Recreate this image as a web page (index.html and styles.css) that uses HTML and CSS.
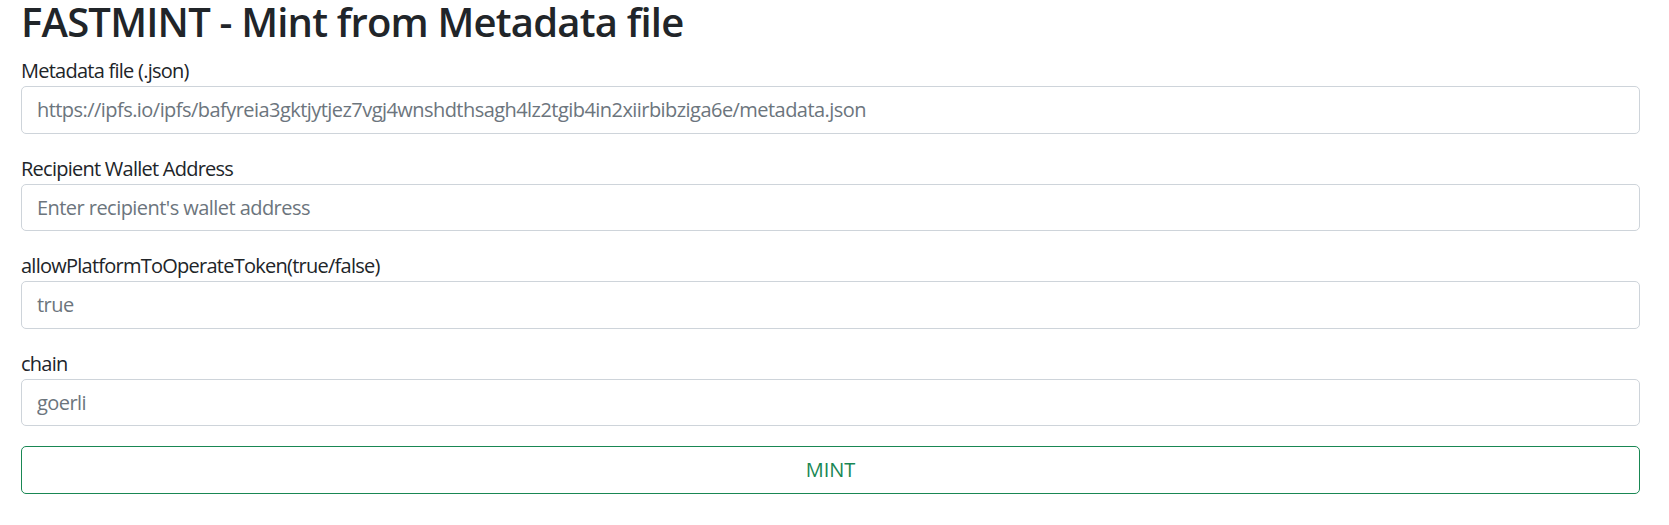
FILE: index.html
```html
<!DOCTYPE html>
<html lang="en">
<head>
<meta charset="utf-8">
<title>FASTMINT</title>
<link rel="stylesheet" href="styles.css">
</head>
<body>
<main class="page">
  <h1 class="title">FASTMINT - Mint from Metadata file</h1>
  <form class="form">
    <div class="group">
      <label class="label" for="meta">Metadata file (.json)</label>
      <input class="control" id="meta" type="text" placeholder="https://ipfs.io/ipfs/bafyreia3gktjytjez7vgj4wnshdthsagh4lz2tgib4in2xiirbibziga6e/metadata.json">
    </div>
    <div class="group">
      <label class="label" for="wallet">Recipient Wallet Address</label>
      <input class="control" id="wallet" type="text" placeholder="Enter recipient's wallet address">
    </div>
    <div class="group">
      <label class="label" for="allow">allowPlatformToOperateToken(true/false)</label>
      <input class="control" id="allow" type="text" placeholder="true">
    </div>
    <div class="group">
      <label class="label" for="chain">chain</label>
      <input class="control" id="chain" type="text" placeholder="goerli">
    </div>
    <button class="btn-mint" type="button">MINT</button>
  </form>
</main>
</body>
</html>
```

FILE: styles.css
```css
* { box-sizing: border-box; }
html, body { margin: 0; padding: 0; background: #fff; }
body {
  font-family: "Open Sans", "Noto Sans", sans-serif;
  color: #212529;
  font-size: 20px;
  line-height: 30px;
}
.page {
  padding: 0 29px 0 21px;
}
.title {
  margin: 0 0 12px 0;
  font-size: 40px;
  font-weight: 600;
  line-height: 44px;
  letter-spacing: -0.8px;
  color: #212529;
}
.form { display: flex; flex-direction: column; }
.group {
  display: flex;
  flex-direction: column;
  margin-bottom: 20px;
}
.label {
  font-size: 20px;
  line-height: 30px;
  letter-spacing: -0.75px;
  color: #212529;
}
.control {
  display: block;
  width: 100%;
  height: 47.5px;
  padding: 0 15px;
  font-family: inherit;
  font-size: 20px;
  line-height: 30px;
  letter-spacing: -0.55px;
  color: #212529;
  background: #fff;
  border: 1px solid #ced4da;
  border-radius: 5px;
  outline: none;
}
.control::placeholder { color: #6c757d; opacity: 1; }
.btn-mint {
  display: block;
  width: 100%;
  height: 48px;
  font-family: inherit;
  font-size: 20px;
  line-height: 30px;
  color: #198754;
  background: #fff;
  border: 1px solid #198754;
  border-radius: 5px;
  cursor: pointer;
}
```
